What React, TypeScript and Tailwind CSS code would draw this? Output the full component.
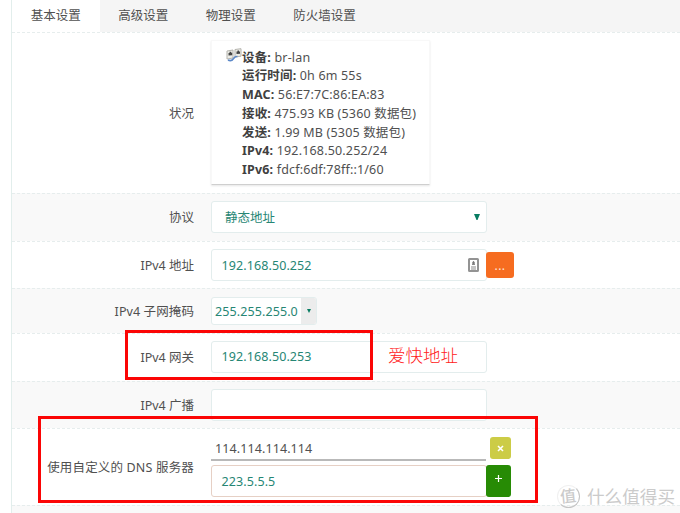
import type { ReactNode } from "react";

const tabs = ["基本设置", "高级设置", "物理设置", "防火墙设置"];

const status: [string, string][] = [
  ["设备:", "br-lan"],
  ["运行时间:", "0h 6m 55s"],
  ["MAC:", "56:E7:7C:86:EA:83"],
  ["接收:", "475.93 KB (5360 数据包)"],
  ["发送:", "1.99 MB (5305 数据包)"],
  ["IPv4:", "192.168.50.252/24"],
  ["IPv6:", "fdcf:6df:78ff::1/60"],
];

function Row({ label, className, labelClass = "", children }: { label: string; className: string; labelClass?: string; children?: ReactNode }) {
  return (
    <div className={`flex items-center border-t border-dashed border-[#e6eded] ${className}`}>
      <div className={`w-[182px] shrink-0 pt-[2px] text-right whitespace-nowrap ${labelClass}`}>{label}</div>
      <div className="ml-[17px] flex">{children}</div>
    </div>
  );
}

function Field({ value, className = "border-[#e3eded]", children }: { value?: string; className?: string; children?: ReactNode }) {
  return (
    <div className={`flex h-8 w-[276px] items-center justify-between rounded-[3px] border border-solid bg-white pl-[9.5px] text-[#268674] ${className}`}>
      <span className="pt-[2px] tracking-[0.1px]">{value}</span>
      {children}
    </div>
  );
}

function BridgeIcon() {
  return (
    <svg className="-mt-px h-[14px] w-4 shrink-0" viewBox="0 0 16 14" fill="none">
      <path d="M1 3l6-1v8l-6 1z" fill="#eeeee8" stroke="#b4b3ad" />
      <path d="M9 1.5l6-.8v7.5l-6 .8z" fill="#eeeee8" stroke="#b4b3ad" />
      <path d="M2.5 7.5V5h1V3.8h1.7v1h1v2.4zM10.5 6V3.4h1v-1h1.5v1h1v2.4z" fill="#454545" />
      <path d="M2 12c3 1.6 5-.4 6-2 1-1.7 2-1.5 3.5-1.5" stroke="#5b88c8" strokeWidth="1.6" />
    </svg>
  );
}

export default function App() {
  return (
    <div className="relative h-[513px] w-[680px] overflow-hidden bg-white font-['Noto_Sans','Noto_Sans_CJK_SC',sans-serif] text-[12.5px] leading-[18.8px] text-[#505050]">
      <div className="ml-[11px] h-full border-l border-[#e2eeec]">
        <div className="flex h-8 bg-[#f5f5f5]">
          {tabs.map((tab, i) => (
            <div key={tab} className={`h-8 px-[18.75px] pt-[7px] ${i === 0 ? "bg-white" : ""}`}>
              {tab}
            </div>
          ))}
        </div>

        <Row label="状况" className="h-[161px]">
          <div className="-mt-[2px] flex h-[145px] w-[219px] border border-[#f8f8f8] border-b-[#cfcfcf] bg-white pt-[8px] pl-[14px] shadow-[0_1px_2px_rgba(0,0,0,0.10)]">
            <BridgeIcon />
            <div className="tracking-[0.17px] whitespace-nowrap">
              {status.map(([name, value]) => (
                <div key={name}>
                  <b className="text-[#404040]">{name}</b> {value}
                </div>
              ))}
            </div>
          </div>
        </Row>

        <Row label="协议" className="h-12 bg-[#f9f9f9]">
          <div className="-mt-[2px] flex h-8 w-[276px] items-center justify-between rounded-[3px] border border-[#e3eded] bg-white pr-[6px] pl-[13px] text-[#268674]">
            <span className="pt-[3px]">静态地址</span>
            <svg width="6" height="6" viewBox="0 0 6 6"><path d="M0 0h6L3.5 6h-1z" fill="#087c62" /></svg>
          </div>
        </Row>

        <Row label="IPv4 地址" className="h-[47px]">
          <Field value="192.168.50.252">
            <svg className="mr-[7px]" width="11" height="14" viewBox="0 0 11 14" fill="none">
              <rect x="1" y="1" width="9" height="12" rx="0.5" stroke="#939393" strokeWidth="2" />
              <path d="M5.5 3v4M4 6.5h3M3 9h5M3 11h5" stroke="#8c8c8c" strokeWidth="1.2" />
              <circle cx="5.5" cy="5" r="1.3" fill="#777" />
            </svg>
          </Field>
          <div className="mt-[3px] -ml-px flex h-[26px] w-7 items-center justify-center rounded-[3px] bg-[#f66c20] pt-[3px] text-[12px] tracking-[0.5px] text-[#ffe6d8]">...</div>
        </Row>

        <Row label="IPv4 子网掩码" className="h-[45px] bg-[#f9f9f9]" labelClass="tracking-[0.1px]">
          <div className="flex h-7 w-[106px] items-center overflow-hidden rounded-[3px] border border-[#e3eded] bg-white text-[#268674]">
            <span className="w-[89px] shrink-0 pt-[2px] pl-[3px] tracking-[0.1px]">255.255.255.0</span>
            <span className="flex h-full flex-1 items-center justify-center bg-[#ececec]">
              <svg width="4" height="4" viewBox="0 0 4 4"><path d="M0 0h4L2 4z" fill="#087c62" /></svg>
            </span>
          </div>
        </Row>

        <Row label="IPv4 网关" className="h-12">
          <div className="-mt-[2px]">
            <Field value="192.168.50.253" />
          </div>
        </Row>

        <Row label="IPv4 广播" className="h-[47px] bg-[#f9f9f9]">
          <Field />
        </Row>

        <Row label="使用自定义的 DNS 服务器" className="h-[77px]" labelClass="tracking-[0.17px]">
          <div className="flex flex-col gap-1">
            <div className="flex h-6 items-start">
              <div className="h-6 w-[275px] border-b-2 border-[#b9b9b9] pt-[3px] pl-1 tracking-[0.1px]">114.114.114.114</div>
              <div className="ml-1 flex h-[22px] w-[21px] items-center justify-center rounded-[3px] bg-[#cccc46]">
                <svg width="7" height="7" viewBox="0 0 7 7"><path d="M1 1l5 5M6 1L1 6" stroke="#fff" strokeWidth="1.6" /></svg>
              </div>
            </div>
            <div className="flex">
              <Field value="223.5.5.5" className="border-[#e6d0c5]" />
              <div className="-ml-px flex h-8 w-[25px] justify-center rounded-[3px] bg-[#278b05] pt-[10px]">
                <svg width="7" height="7" viewBox="0 0 7 7"><path d="M3.5 0v7M0 3.5h7" stroke="#fff" strokeWidth="1.2" /></svg>
              </div>
            </div>
          </div>
        </Row>

        <div className="h-2 border-t border-dashed border-[#e6eded] bg-[#f9f9f9]" />
      </div>

      <div className="absolute top-[330px] left-[125px] h-[50px] w-[248px] border-[3px] border-[#fb0505]" />
      <div className="absolute top-[342px] left-[388px] text-[17.5px] leading-[26px] font-light text-[#ff2020]">爱快地址</div>
      <div className="absolute top-[416px] left-[38px] h-[87px] w-[500px] border-[3px] border-[#fb0505]" />

      <div className="absolute top-[484px] left-[557px] flex items-center text-[17.6px] leading-6 text-[#cbcbcb]">
        <span className="flex size-[23px] items-center justify-center rounded-full border border-[#f0f0f0] border-r-[#c4c4c4] border-b-[#c4c4c4]">
          <span className="-rotate-6 text-[16px] font-medium">值</span>
        </span>
        <span className="ml-[7px] whitespace-nowrap">什么值得买</span>
      </div>
    </div>
  );
}
